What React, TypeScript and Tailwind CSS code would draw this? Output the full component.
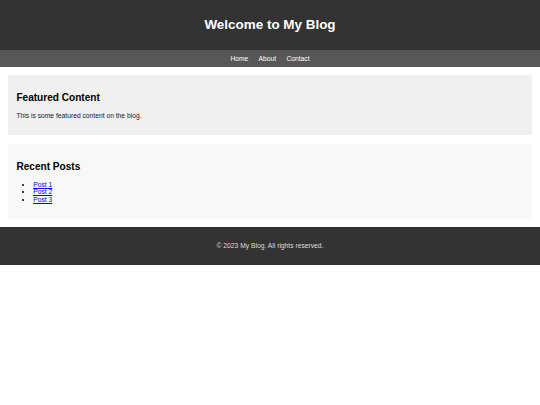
export default function App() {
  const posts = ["Post 1", "Post 2", "Post 3"]

  return (
    <div className="min-h-screen bg-white text-black font-['Liberation_Sans',Arial,sans-serif] text-[6.72px] leading-[1.15]">
      <header className="bg-[#333333] text-white text-center p-[8.4px]">
        <h1 className="text-[13.44px] font-bold my-[9px] leading-[1.15]">Welcome to My Blog</h1>
      </header>

      <nav className="bg-[#575757] text-center py-[4.5px]">
        <a href="#" className="text-white no-underline mx-[4.2px]">Home</a>{" "}
        <a href="#" className="text-white no-underline mx-[4.2px]">About</a>{" "}
        <a href="#" className="text-white no-underline mx-[4.2px]">Contact</a>
      </nav>

      <main className="px-[8px] py-[8.4px]">
        <section className="bg-[#f0f0f0] p-[8.4px] mb-[8.6px]">
          <h2 className="text-[10.08px] font-bold my-[8.4px]">Featured Content</h2>
          <p className="my-[6.72px] text-[#222]">This is some featured content on the blog.</p>
        </section>

        <section className="bg-[#f8f8f8] p-[8.4px]">
          <h2 className="text-[10.08px] font-bold my-[8.6px]">Recent Posts</h2>
          <ul className="list-disc pl-[16.8px] my-[6.72px]">
            {posts.map((post) => (
              <li key={post}>
                <a href="#" className="text-[#0000ee] underline">{post}</a>
              </li>
            ))}
          </ul>
        </section>
      </main>

      <footer className="bg-[#333333] text-[#dddddd] text-center p-[8.4px]">
        <p className="my-[6.72px]">© 2023 My Blog. All rights reserved.</p>
      </footer>
    </div>
  )
}
